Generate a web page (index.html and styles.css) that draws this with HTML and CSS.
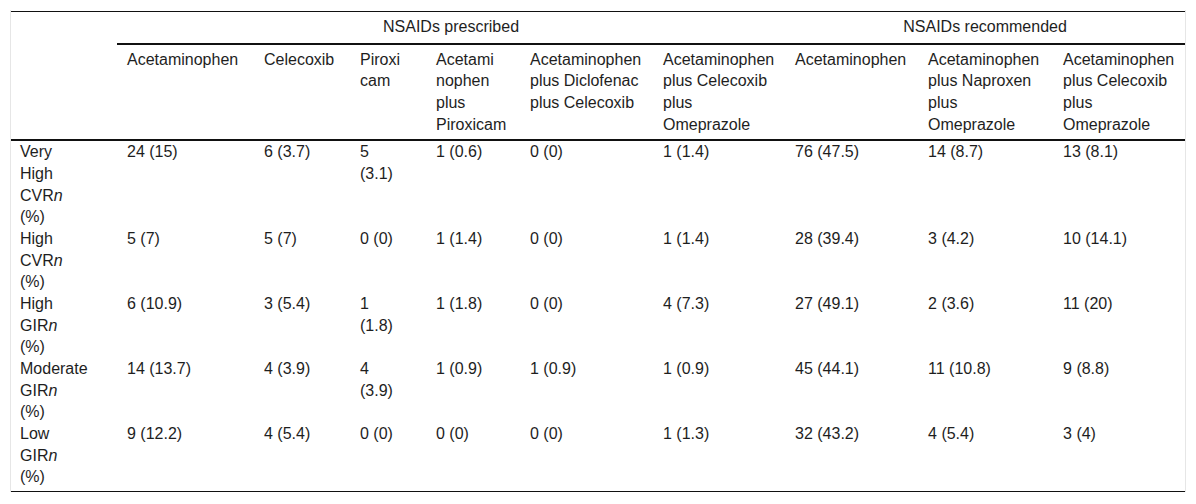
FILE: index.html
```html
<!DOCTYPE html>
<html lang="en">
<head>
<meta charset="utf-8">
<title>NSAIDs table</title>
<link rel="stylesheet" href="styles.css">
</head>
<body>
<div class="frame">
<table class="data">
  <colgroup>
    <col class="w0"><col class="w1"><col class="w2"><col class="w3"><col class="w4">
    <col class="w5"><col class="w6"><col class="w7"><col class="w8"><col class="w9">
  </colgroup>
  <thead>
    <tr class="group">
      <th class="corner" rowspan="2"></th>
      <th class="grp" colspan="6">NSAIDs prescribed</th>
      <th class="grp" colspan="3">NSAIDs recommended</th>
    </tr>
    <tr class="sub">
      <th>Acetaminophen</th>
      <th>Celecoxib</th>
      <th>Piroxi<wbr>cam</th>
      <th>Acetami<wbr>nophen plus Piroxicam</th>
      <th>Acetaminophen plus Diclofenac plus Celecoxib</th>
      <th>Acetaminophen plus Celecoxib plus Omeprazole</th>
      <th>Acetaminophen</th>
      <th>Acetaminophen plus Naproxen plus Omeprazole</th>
      <th>Acetaminophen plus Celecoxib plus Omeprazole</th>
    </tr>
  </thead>
  <tbody>
    <tr>
      <td>Very High CVR<em>n</em> (%)</td>
      <td>24 (15)</td><td>6 (3.7)</td><td>5 (3.1)</td><td>1 (0.6)</td><td>0 (0)</td><td>1 (1.4)</td><td>76 (47.5)</td><td>14 (8.7)</td><td>13 (8.1)</td>
    </tr>
    <tr>
      <td>High CVR<em>n</em> (%)</td>
      <td>5 (7)</td><td>5 (7)</td><td>0 (0)</td><td>1 (1.4)</td><td>0 (0)</td><td>1 (1.4)</td><td>28 (39.4)</td><td>3 (4.2)</td><td>10 (14.1)</td>
    </tr>
    <tr>
      <td>High GIR<em>n</em> (%)</td>
      <td>6 (10.9)</td><td>3 (5.4)</td><td>1 (1.8)</td><td>1 (1.8)</td><td>0 (0)</td><td>4 (7.3)</td><td>27 (49.1)</td><td>2 (3.6)</td><td>11 (20)</td>
    </tr>
    <tr>
      <td>Moderate GIR<em>n</em> (%)</td>
      <td>14 (13.7)</td><td>4 (3.9)</td><td>4 (3.9)</td><td>1 (0.9)</td><td>1 (0.9)</td><td>1 (0.9)</td><td>45 (44.1)</td><td>11 (10.8)</td><td>9 (8.8)</td>
    </tr>
    <tr>
      <td>Low GIR<em>n</em> (%)</td>
      <td>9 (12.2)</td><td>4 (5.4)</td><td>0 (0)</td><td>0 (0)</td><td>0 (0)</td><td>1 (1.3)</td><td>32 (43.2)</td><td>4 (5.4)</td><td>3 (4)</td>
    </tr>
  </tbody>
</table>
</div>
</body>
</html>
```

FILE: styles.css
```css
html, body {
  margin: 0;
  padding: 0;
  background: #ffffff;
}

body {
  font-family: "Liberation Sans", Arial, sans-serif;
  font-size: 16px;
  line-height: 21.67px;
  color: #1e1e1e;
}

.frame {
  box-sizing: border-box;
  width: 1176px;
  margin: 10px 0 0 10px;
  padding-top: 1px;
  border-left: 1px solid #e6e6e6;
  border-right: 1px solid #e6e6e6;
}

.data {
  width: 100%;
  table-layout: fixed;
  border-collapse: separate;
  border-spacing: 0;
  border-top: 1px solid #111111;
  border-bottom: 1px solid #111111;
}

.w0 { width: 106px; }
.w1 { width: 137px; }
.w2 { width: 96px; }
.w3 { width: 76px; }
.w4 { width: 94px; }
.w5 { width: 133px; }
.w6 { width: 132px; }
.w7 { width: 133px; }
.w8 { width: 135px; }
.w9 { width: 132px; }

.data th,
.data td {
  text-align: left;
  vertical-align: top;
  font-weight: normal;
  padding: 0 8px 0 10px;
}

.data em {
  font-style: italic;
}

.data .group th {
  padding-top: 4px;
  padding-bottom: 5px;
}

.data .grp {
  text-align: center;
  padding-left: 10px;
  padding-right: 10px;
  border-bottom: 2px solid #111111;
}

.data .corner {
  border-bottom: 2px solid #111111;
}

.data .sub th {
  padding-top: 4px;
  padding-bottom: 4px;
  border-bottom: 2px solid #111111;
}

.data tbody tr:last-child td {
  padding-bottom: 3px;
}

/* narrow content boxes that make the first and fourth columns wrap */
.data tbody td:nth-child(1) { padding-left: 9px; padding-right: 42px; }
.data .sub th:nth-child(3),
.data tbody td:nth-child(4) { padding-right: 23px; }
```
